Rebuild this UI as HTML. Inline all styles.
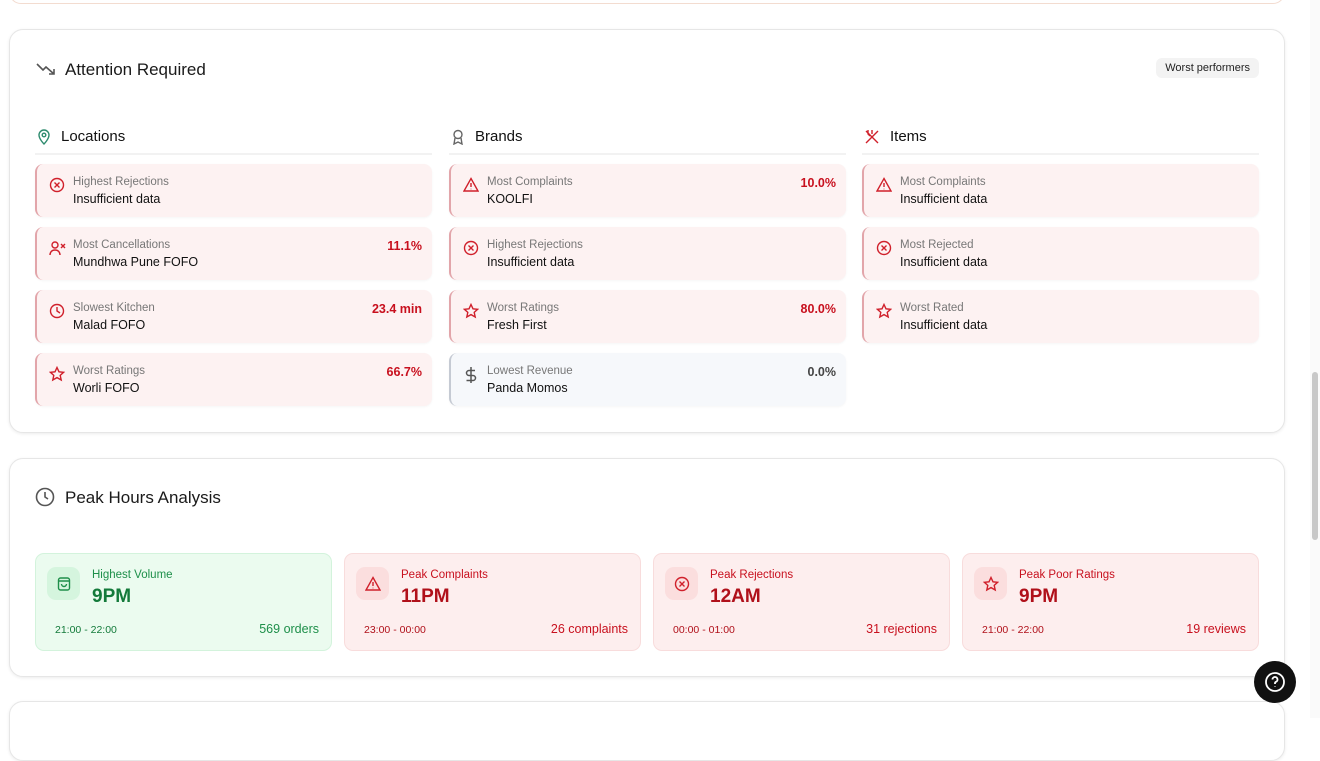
<!DOCTYPE html>
<html><head><meta charset="utf-8"><style>
*{box-sizing:border-box;margin:0;padding:0}
body{width:1320px;height:718px;overflow:hidden;background:#fff;font-family:"Liberation Sans",sans-serif;color:#111;position:relative}
.card{position:absolute;left:9px;width:1276px;border:1px solid #e6e6e6;border-radius:14px;background:#fff;box-shadow:0 1px 3px rgba(0,0,0,.08)}
.h{position:absolute;font-size:17px;font-weight:500;color:#1a1a1a}
.col{position:absolute;top:0;width:397px;height:380px}
.ch{position:absolute;left:0;top:90px;width:397px;height:35px;border-bottom:2px solid #f2f2f2;display:flex;align-items:center;font-size:15px;font-weight:500;padding-left:2px}
.ch svg{margin-right:10px}
.row{position:absolute;left:0;width:397px;height:53px;border-radius:8px;background:#fdf2f2;border-left:2px solid #e2a5aa;box-shadow:0 1px 2px rgba(0,0,0,.04)}
.row.g{background:#f6f8fb;border-left-color:#c5cad3}
.row svg{position:absolute;left:12px;top:13px}
.lb{position:absolute;left:36px;top:12px;font-size:11.5px;color:#777}
.vl{position:absolute;left:36px;top:28px;font-size:12.5px;font-weight:500;color:#111}
.pc{position:absolute;right:10px;top:12px;font-size:12.5px;font-weight:700;color:#c8101e}
.pk{position:absolute;top:94px;width:297px;height:98px;border-radius:9px;background:#fdeeee;border:1px solid #f8dcdc}
.pk.gr{background:#ebfbef;border-color:#d3f3dc}
.ib{position:absolute;left:11px;top:13px;width:33px;height:33px;border-radius:9px;background:#fbdede;display:flex;align-items:center;justify-content:center}
.gr .ib{background:#d5f5de}
.pt{position:absolute;left:56px;top:15px;font-size:11.5px;color:#c8101e}
.pv{position:absolute;left:56px;top:32px;font-size:19px;font-weight:700;color:#b0101a}
.pr{position:absolute;left:19px;top:70px;font-size:10.5px;color:#b0101a}
.pn{position:absolute;right:12px;top:68px;font-size:12.5px;color:#c8101e}
.gr .pt,.gr .pn{color:#1e8f4a}.gr .pv,.gr .pr{color:#137a3a}
</style></head><body>
<div style="position:absolute;left:9px;top:-20px;width:1276px;height:24px;border:1px solid #f3dcd0;border-radius:12px;background:#fff"></div>
<div style="position:absolute;left:1310px;top:0;width:10px;height:718px;background:#fafafa"></div>
<div style="position:absolute;left:1312px;top:372px;width:6px;height:168px;background:#c8c8c8;border-radius:3px"></div>

<div class="card" style="top:29px;height:404px">
 <svg style="position:absolute;left:26px;top:30px" width="20" height="16" viewBox="0 0 20 16" fill="none" stroke="#555" stroke-width="1.6"><path d="M1 4l6 6 3-3 8 7M13 14h5v-5"/></svg>
 <div class="h" style="left:55px;top:30px">Attention Required</div>
 <div style="position:absolute;right:25px;top:28px;background:#f3f3f3;border-radius:6px;padding:4px 9px;font-size:11px;color:#222">Worst performers</div>

 <div class="col" style="left:25px">
  <div class="ch"><svg width="14" height="16" viewBox="0 0 14 16" fill="none" stroke="#2e8b6e" stroke-width="1.4"><path d="M7 15s5-5 5-9A5 5 0 0 0 2 6c0 4 5 9 5 9z"/><circle cx="7" cy="6" r="1.8"/></svg>Locations</div>
  <div class="row" style="top:134px"><svg width="16" height="16" viewBox="0 0 16 16" fill="none" stroke="#d0202b" stroke-width="1.4"><circle cx="8" cy="8" r="6.5"/><path d="M5.5 5.5l5 5M10.5 5.5l-5 5"/></svg><div class="lb">Highest Rejections</div><div class="vl">Insufficient data</div></div>
  <div class="row" style="top:197px"><svg width="18" height="16" viewBox="0 0 18 16" fill="none" stroke="#d0202b" stroke-width="1.4"><circle cx="6" cy="5" r="3"/><path d="M1 15c0-3 2-5 5-5s5 2 5 5M12 4l4 4M16 4l-4 4"/></svg><div class="lb">Most Cancellations</div><div class="vl">Mundhwa Pune FOFO</div><div class="pc">11.1%</div></div>
  <div class="row" style="top:260px"><svg width="16" height="16" viewBox="0 0 16 16" fill="none" stroke="#d0202b" stroke-width="1.4"><circle cx="8" cy="8" r="6.5"/><path d="M8 4v4l3 2"/></svg><div class="lb">Slowest Kitchen</div><div class="vl">Malad FOFO</div><div class="pc">23.4 min</div></div>
  <div class="row" style="top:323px"><svg width="16" height="16" viewBox="0 0 16 16" fill="none" stroke="#d0202b" stroke-width="1.4"><path d="M8 1.5l2 4.3 4.6.5-3.4 3.1 1 4.6L8 11.6 3.8 14l1-4.6L1.4 6.3 6 5.8z"/></svg><div class="lb">Worst Ratings</div><div class="vl">Worli FOFO</div><div class="pc">66.7%</div></div>
 </div>

 <div class="col" style="left:439px">
  <div class="ch"><svg width="14" height="16" viewBox="0 0 14 16" fill="none" stroke="#666" stroke-width="1.4"><circle cx="7" cy="5.5" r="4"/><path d="M4 9l-1 6 4-2 4 2-1-6"/></svg>Brands</div>
  <div class="row" style="top:134px"><svg width="16" height="16" viewBox="0 0 16 16" fill="none" stroke="#d0202b" stroke-width="1.4"><path d="M8 1.5L15 14H1z"/><path d="M8 6v4M8 11.8v.5"/></svg><div class="lb">Most Complaints</div><div class="vl">KOOLFI</div><div class="pc">10.0%</div></div>
  <div class="row" style="top:197px"><svg width="16" height="16" viewBox="0 0 16 16" fill="none" stroke="#d0202b" stroke-width="1.4"><circle cx="8" cy="8" r="6.5"/><path d="M5.5 5.5l5 5M10.5 5.5l-5 5"/></svg><div class="lb">Highest Rejections</div><div class="vl">Insufficient data</div></div>
  <div class="row" style="top:260px"><svg width="16" height="16" viewBox="0 0 16 16" fill="none" stroke="#d0202b" stroke-width="1.4"><path d="M8 1.5l2 4.3 4.6.5-3.4 3.1 1 4.6L8 11.6 3.8 14l1-4.6L1.4 6.3 6 5.8z"/></svg><div class="lb">Worst Ratings</div><div class="vl">Fresh First</div><div class="pc">80.0%</div></div>
  <div class="row g" style="top:323px"><svg width="16" height="18" viewBox="0 0 16 18" fill="none" stroke="#555" stroke-width="1.5"><path d="M8 1v16M12 4.5H6a2.5 2.5 0 0 0 0 5h4a2.5 2.5 0 0 1 0 5H3.5"/></svg><div class="lb">Lowest Revenue</div><div class="vl">Panda Momos</div><div class="pc" style="color:#444">0.0%</div></div>
 </div>

 <div class="col" style="left:852px">
  <div class="ch"><svg width="16" height="16" viewBox="0 0 16 16" fill="none" stroke="#d0202b" stroke-width="1.4"><path d="M2 2l12 12M14 2L2 14M4 1v4l2 2M8 1v4"/></svg>Items</div>
  <div class="row" style="top:134px"><svg width="16" height="16" viewBox="0 0 16 16" fill="none" stroke="#d0202b" stroke-width="1.4"><path d="M8 1.5L15 14H1z"/><path d="M8 6v4M8 11.8v.5"/></svg><div class="lb">Most Complaints</div><div class="vl">Insufficient data</div></div>
  <div class="row" style="top:197px"><svg width="16" height="16" viewBox="0 0 16 16" fill="none" stroke="#d0202b" stroke-width="1.4"><circle cx="8" cy="8" r="6.5"/><path d="M5.5 5.5l5 5M10.5 5.5l-5 5"/></svg><div class="lb">Most Rejected</div><div class="vl">Insufficient data</div></div>
  <div class="row" style="top:260px"><svg width="16" height="16" viewBox="0 0 16 16" fill="none" stroke="#d0202b" stroke-width="1.4"><path d="M8 1.5l2 4.3 4.6.5-3.4 3.1 1 4.6L8 11.6 3.8 14l1-4.6L1.4 6.3 6 5.8z"/></svg><div class="lb">Worst Rated</div><div class="vl">Insufficient data</div></div>
 </div>
</div>

<div class="card" style="top:458px;height:219px">
 <svg style="position:absolute;left:25px;top:28px" width="20" height="20" viewBox="0 0 20 20" fill="none" stroke="#555" stroke-width="1.6"><circle cx="10" cy="10" r="8.5"/><path d="M10 5v5l3 2"/></svg>
 <div class="h" style="left:55px;top:29px">Peak Hours Analysis</div>
 <div class="pk gr" style="left:25px"><div class="ib"><svg width="16" height="16" viewBox="0 0 16 16" fill="none" stroke="#1e8f4a" stroke-width="1.4"><rect x="2.5" y="2" width="11" height="12" rx="2"/><path d="M2.5 5h11M5.5 8a2.5 2.5 0 0 0 5 0"/></svg></div><div class="pt">Highest Volume</div><div class="pv">9PM</div><div class="pr">21:00 - 22:00</div><div class="pn">569 orders</div></div>
 <div class="pk" style="left:334px"><div class="ib"><svg width="16" height="16" viewBox="0 0 16 16" fill="none" stroke="#d0202b" stroke-width="1.4"><path d="M8 1.5L15 14H1z"/><path d="M8 6v4M8 11.8v.5"/></svg></div><div class="pt">Peak Complaints</div><div class="pv">11PM</div><div class="pr">23:00 - 00:00</div><div class="pn">26 complaints</div></div>
 <div class="pk" style="left:643px"><div class="ib"><svg width="16" height="16" viewBox="0 0 16 16" fill="none" stroke="#d0202b" stroke-width="1.4"><circle cx="8" cy="8" r="6.5"/><path d="M5.5 5.5l5 5M10.5 5.5l-5 5"/></svg></div><div class="pt">Peak Rejections</div><div class="pv">12AM</div><div class="pr">00:00 - 01:00</div><div class="pn">31 rejections</div></div>
 <div class="pk" style="left:952px"><div class="ib"><svg width="16" height="16" viewBox="0 0 16 16" fill="none" stroke="#d0202b" stroke-width="1.4"><path d="M8 1.5l2 4.3 4.6.5-3.4 3.1 1 4.6L8 11.6 3.8 14l1-4.6L1.4 6.3 6 5.8z"/></svg></div><div class="pt">Peak Poor Ratings</div><div class="pv">9PM</div><div class="pr">21:00 - 22:00</div><div class="pn">19 reviews</div></div>
</div>

<div class="card" style="top:701px;height:60px"></div>

<div style="position:absolute;left:1254px;top:661px;width:42px;height:42px;border-radius:50%;background:#111;display:flex;align-items:center;justify-content:center">
 <svg width="22" height="22" viewBox="0 0 22 22" fill="none" stroke="#fff" stroke-width="1.8"><circle cx="11" cy="11" r="9"/><path d="M8.5 8.5a2.5 2.5 0 1 1 3.5 2.3c-.7.3-1 .8-1 1.5v.7"/><path d="M11 15.5v.5"/></svg>
</div>
</body></html>
